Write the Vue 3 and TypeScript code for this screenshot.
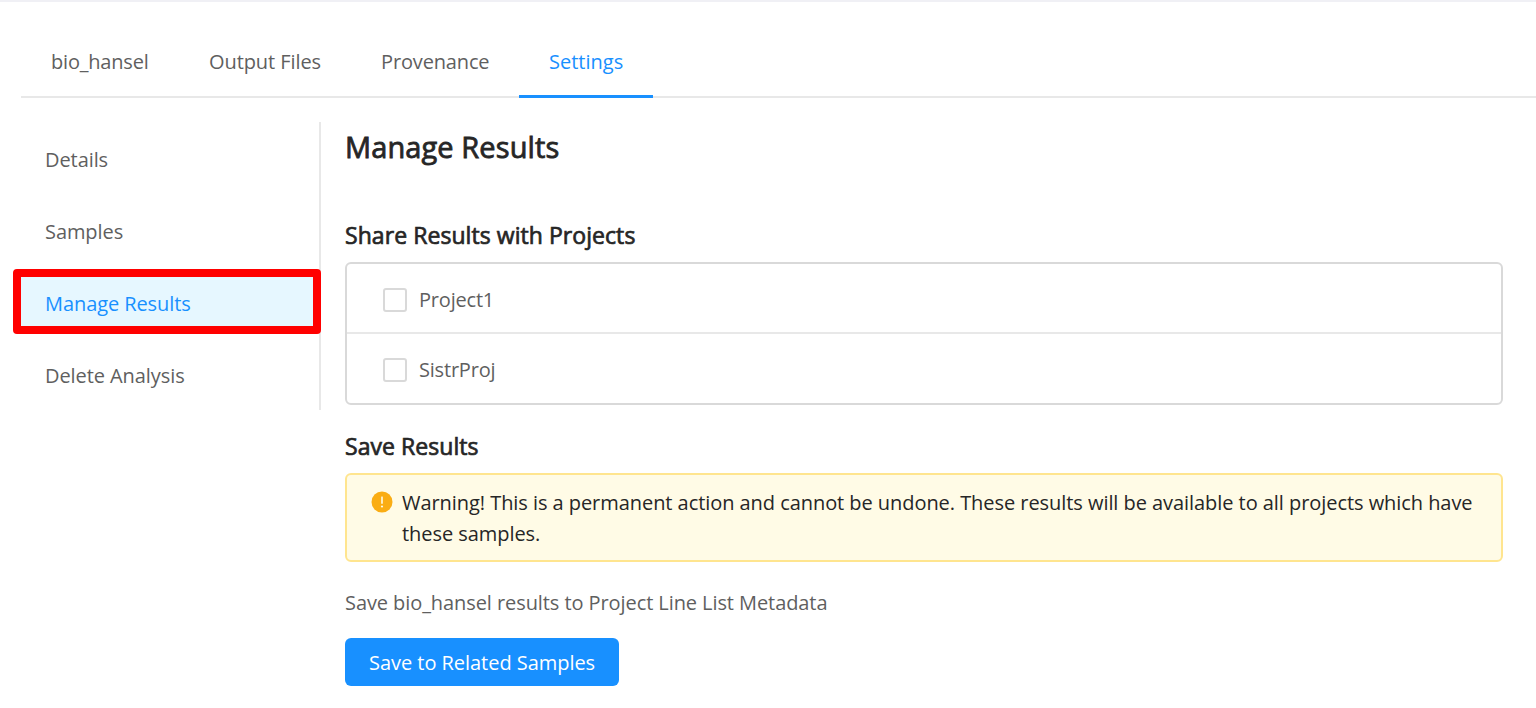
<script setup lang="ts">
import { ref } from 'vue'

interface Entry {
  label: string
  key: string
}

const tabs: Entry[] = [
  { label: 'bio_hansel', key: 'hansel' },
  { label: 'Output Files', key: 'output' },
  { label: 'Provenance', key: 'provenance' },
  { label: 'Settings', key: 'settings' },
]
const menu: Entry[] = [
  { label: 'Details', key: 'details' },
  { label: 'Samples', key: 'samples' },
  { label: 'Manage Results', key: 'manage' },
  { label: 'Delete Analysis', key: 'delete' },
]
const projects: Entry[] = [
  { label: 'Project1', key: 'project1' },
  { label: 'SistrProj', key: 'sistr' },
]
const activeTab = ref('settings')
const activeItem = ref('manage')
</script>

<template>
  <div class="page">
    <nav class="tabs">
      <a
        v-for="t in tabs"
        :key="t.key"
        class="tab"
        :class="[t.key, { active: t.key === activeTab }]"
        @click="activeTab = t.key"
      ><span>{{ t.label }}</span></a>
    </nav>
    <div class="body">
      <aside class="menu">
        <a
          v-for="m in menu"
          :key="m.key"
          class="item"
          :class="[m.key, { selected: m.key === activeItem }]"
          @click="activeItem = m.key"
        ><span>{{ m.label }}</span></a>
      </aside>
      <main class="content">
        <h2 class="title">Manage Results</h2>
        <h3 class="sub share">Share Results with Projects</h3>
        <div class="list">
          <label v-for="p in projects" :key="p.key" class="row">
            <input type="checkbox" class="check" />
            <span :class="p.key">{{ p.label }}</span>
          </label>
        </div>
        <h3 class="sub save">Save Results</h3>
        <div class="alert">
          <svg class="icon" viewBox="0 0 22 22">
            <circle cx="11" cy="11" r="10.5" fill="#faad14" />
            <rect x="10.2" y="5.6" width="1.6" height="7.2" rx="0.3" fill="#fffbe6" />
            <circle cx="11" cy="15.5" r="1.1" fill="#fffbe6" />
          </svg>
          <p class="message">
            <span class="line1">Warning! This is a permanent action and cannot be undone. These results will be available to all projects which have</span>
            <span class="line2">these samples.</span>
          </p>
        </div>
        <p class="note">Save bio_hansel results to Project Line List Metadata</p>
        <button class="button">Save to Related Samples</button>
      </main>
    </div>
  </div>
</template>

<style>
body {
  margin: 0;
  background: #fff;
}
</style>

<style scoped>
.page {
  box-sizing: border-box;
  height: 708px;
  overflow: hidden;
  border-top: 2px solid #f0f0f5;
  background: #fff;
  padding-top: 24px;
  color: #5f5f5f;
  font: 400 20px/31px "Open Sans", "Noto Sans", sans-serif;
  letter-spacing: -0.08px;
}
.tabs {
  box-sizing: border-box;
  display: flex;
  height: 72px;
  margin-left: 21px;
  border-bottom: 2px solid #e8e8e8;
}
.tab {
  box-sizing: border-box;
  height: 72px;
  padding: 20px 0 0 30px;
  white-space: nowrap;
  cursor: pointer;
}
.tab.hansel { width: 158px; letter-spacing: -0.2px; }
.tab.output { width: 172px; }
.tab.provenance { width: 168px; letter-spacing: -0.15px; }
.tab.settings { width: 134px; letter-spacing: 0; }
.tab.active {
  color: #1890ff;
  border-bottom: 3px solid #1890ff;
}
.body {
  display: flex;
  padding: 24px 33px 0 21px;
}
.menu {
  box-sizing: border-box;
  width: 300px;
  height: 288px;
  flex: none;
  border-right: 2px solid #e8e8e8;
}
.item {
  box-sizing: border-box;
  display: block;
  height: 72px;
  padding: 22px 0 0 24px;
  white-space: nowrap;
  cursor: pointer;
}
.item.selected {
  position: relative;
  height: 65px;
  margin: 3px -2px 4px -8px;
  padding: 11px 0 0 24px;
  border: 8px solid #f00;
  border-radius: 4px;
  background: #e6f7ff;
  color: #1890ff;
}
.content {
  flex: 1;
  min-width: 0;
  padding-left: 24px;
}
h2, h3, p { margin: 0; }
.title {
  height: 98px;
  color: #262626;
  font-size: 29px;
  font-weight: 400;
  line-height: 50px;
  letter-spacing: 0.1px;
  -webkit-text-stroke: 0.8px #262626;
}
.sub {
  height: 42px;
  color: #262626;
  font-size: 23px;
  font-weight: 400;
  line-height: 30px;
  letter-spacing: 0.06px;
  -webkit-text-stroke: 0.7px #262626;
}
.list {
  box-sizing: border-box;
  height: 143px;
  border: 2px solid #d9d9d9;
  border-radius: 6px;
}
.row {
  box-sizing: border-box;
  display: flex;
  align-items: center;
  height: 70px;
  padding: 4px 0 0 36px;
}
.row + .row { border-top: 2px solid #e8e8e8; }
.row:first-child { height: 68px; }
.row span {
  margin-left: 12px;
  line-height: 30px;
  letter-spacing: -0.2px;
}
.check {
  appearance: none;
  box-sizing: border-box;
  width: 24px;
  height: 24px;
  margin: 0;
  border: 2px solid #d9d9d9;
  border-radius: 3px;
  background: #fff;
}
.save { margin-top: 26px; }
.alert {
  box-sizing: border-box;
  display: flex;
  height: 89px;
  padding: 12px 0 0 24px;
  border: 2px solid #ffe58f;
  border-radius: 6px;
  background: #fffbe6;
  color: #262626;
}
.icon {
  flex: none;
  width: 22px;
  height: 22px;
  margin: 4px 9px 0 0;
}
.message span {
  display: block;
  white-space: nowrap;
}
.message { letter-spacing: -0.055px; }
.note { margin-top: 25px; }
.button {
  display: block;
  width: 274px;
  height: 48px;
  margin-top: 20px;
  padding: 0 0 0 24px;
  border: 0;
  border-radius: 6px;
  background: #1890ff;
  color: #fff;
  font: inherit;
  letter-spacing: -0.04px;
  text-align: left;
  white-space: nowrap;
}
</style>
